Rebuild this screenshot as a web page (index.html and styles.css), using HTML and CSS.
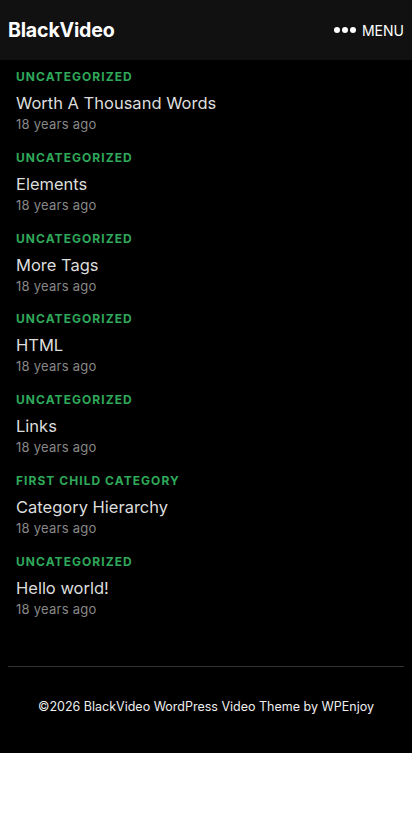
FILE: index.html
```html
<!DOCTYPE html>
<html lang="en">
<head>
<meta charset="utf-8">
<meta name="viewport" content="width=device-width, initial-scale=1">
<title>BlackVideo</title>
<link rel="stylesheet" href="styles.css">
</head>
<body>
<div class="page">
  <header class="site-header">
    <a class="logo" href="#">BlackVideo</a>
    <button class="menu-toggle"><span class="dots"><i></i><i></i><i></i></span>MENU</button>
  </header>
  <main class="posts">
    <article class="post">
      <div class="cat">Uncategorized</div>
      <h2 class="title">Worth A Thousand Words</h2>
      <div class="date">18 years ago</div>
    </article>
    <article class="post">
      <div class="cat">Uncategorized</div>
      <h2 class="title">Elements</h2>
      <div class="date">18 years ago</div>
    </article>
    <article class="post">
      <div class="cat">Uncategorized</div>
      <h2 class="title">More Tags</h2>
      <div class="date">18 years ago</div>
    </article>
    <article class="post">
      <div class="cat">Uncategorized</div>
      <h2 class="title">HTML</h2>
      <div class="date">18 years ago</div>
    </article>
    <article class="post">
      <div class="cat">Uncategorized</div>
      <h2 class="title">Links</h2>
      <div class="date">18 years ago</div>
    </article>
    <article class="post">
      <div class="cat">First Child Category</div>
      <h2 class="title">Category Hierarchy</h2>
      <div class="date">18 years ago</div>
    </article>
    <article class="post">
      <div class="cat">Uncategorized</div>
      <h2 class="title">Hello world!</h2>
      <div class="date">18 years ago</div>
    </article>
  </main>
  <footer class="site-footer">
    <div class="footer-line"></div>
    <p class="copy">©2026 BlackVideo WordPress Video Theme by WPEnjoy</p>
  </footer>
</div>
</body>
</html>
```

FILE: styles.css
```css
html { background: #fff; }
body {
  margin: 0;
  font-family: Inter, "Noto Sans", sans-serif;
  color: #ddd;
}
.page { background: #000; }
.site-header {
  height: 60px;
  background: #111;
  display: flex;
  align-items: center;
  justify-content: space-between;
  padding: 0 8px;
}
.logo {
  color: #fff;
  text-decoration: none;
  font-weight: 700;
  font-size: 19.6px;
  letter-spacing: -0.2px;
}
.menu-toggle {
  background: none;
  border: 0;
  padding: 0;
  color: #fff;
  font-family: inherit;
  font-size: 14px;
  display: flex;
  align-items: center;
  gap: 6px;
}
.dots { display: flex; gap: 2px; }
.dots i { width: 6px; height: 6px; border-radius: 50%; background: #fff; display: block; }
.posts {
  padding: 7px 16px 16px;
  display: flex;
  flex-direction: column;
}
.post { height: 80.8px; }
.cat {
  text-transform: uppercase;
  color: #2fa95a;
  font-weight: 700;
  font-size: 12px;
  letter-spacing: 1.05px;
  line-height: 20px;
}
.title {
  margin: 5px 0 0;
  font-weight: 400;
  font-size: 16.5px;
  line-height: 22px;
  color: #ddd;
}
.date {
  font-size: 13px;
  letter-spacing: 0.25px;
  color: #888;
  line-height: 20px;
}
.site-footer { padding: 17px 8px 0; }
.footer-line { height: 1px; background: #333; }
.copy {
  margin: 0;
  padding: 32px 0 38px;
  text-align: center;
  font-size: 12.5px;
  color: #eee;
  line-height: 16px;
}
```
